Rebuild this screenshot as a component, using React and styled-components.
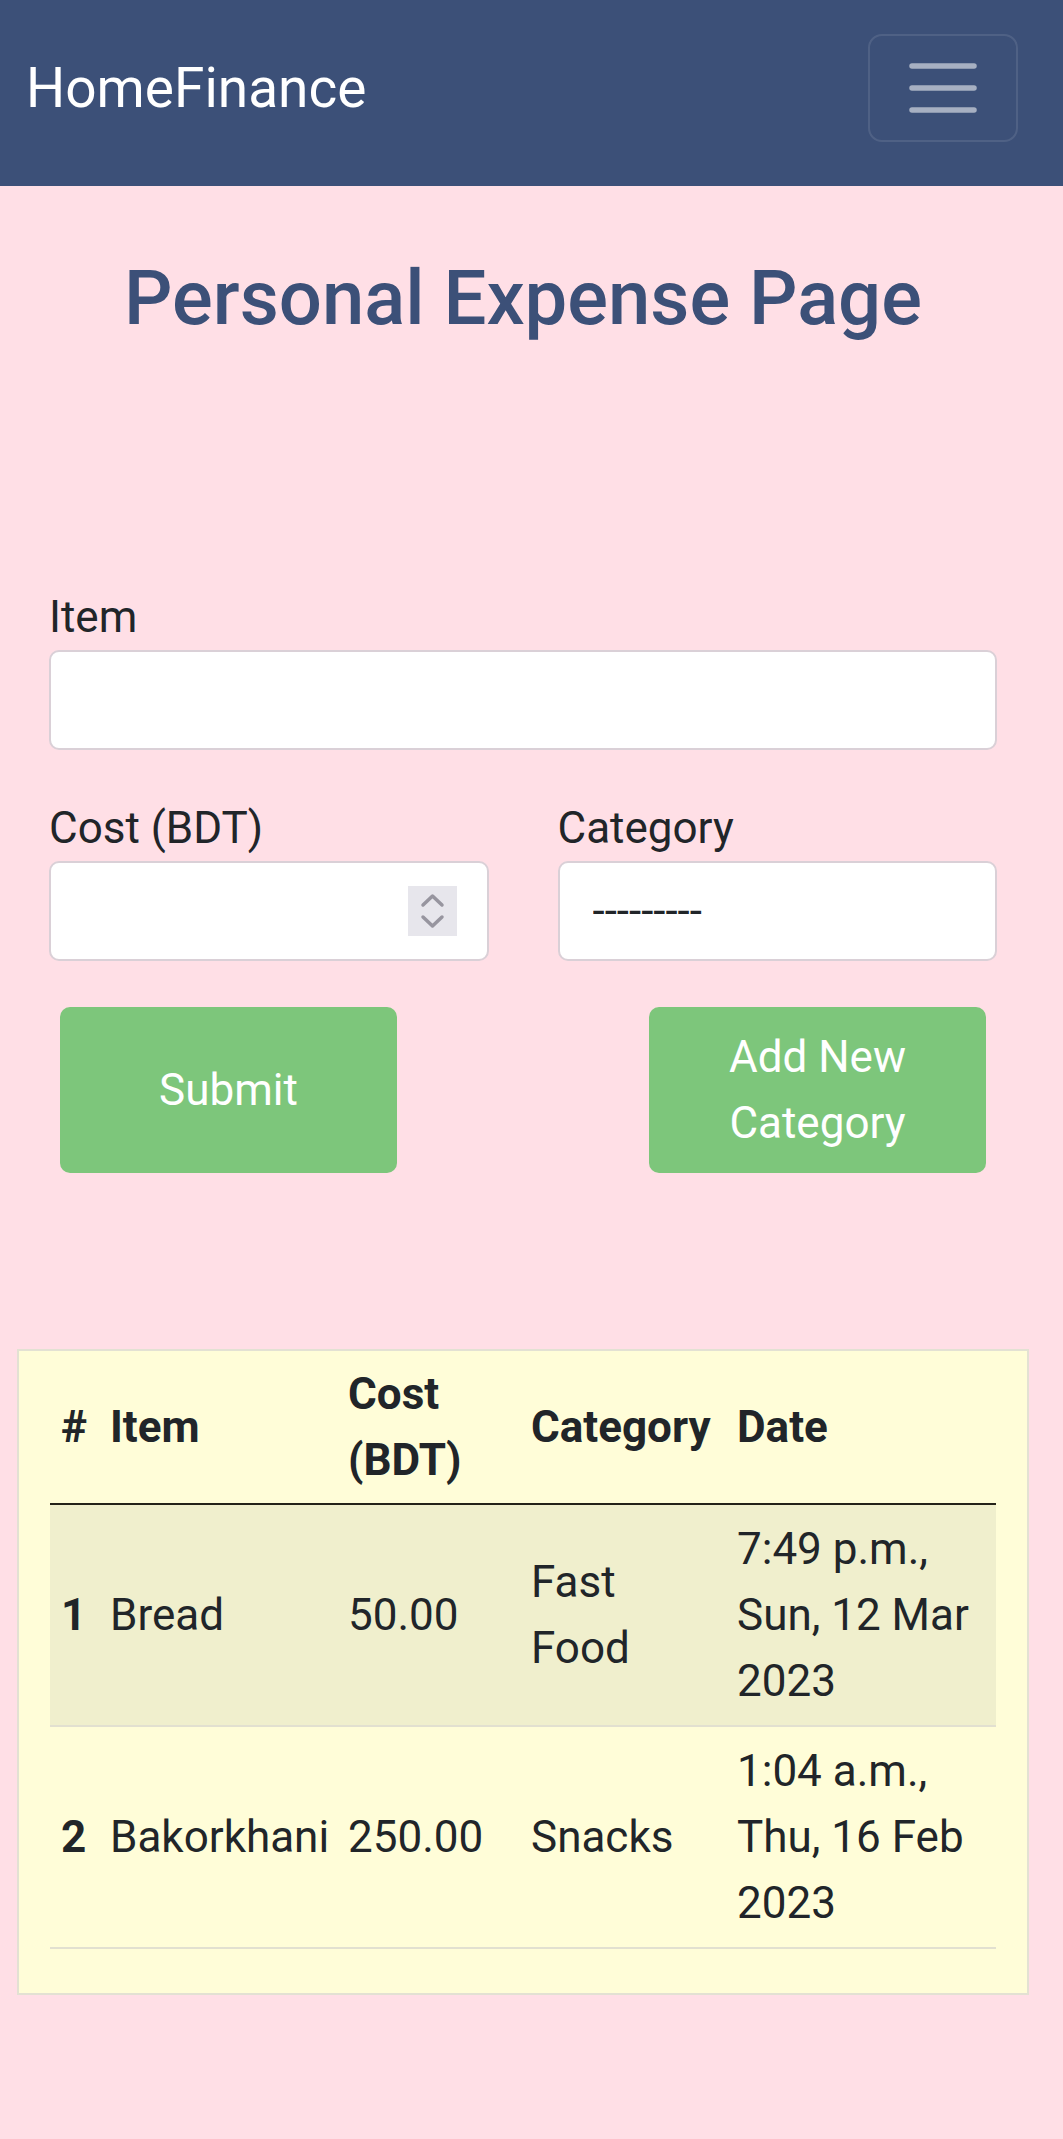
import styled, { createGlobalStyle } from "styled-components";

const GlobalStyle = createGlobalStyle`
    body {
        margin: 0;
        background: #ffdfe6;
        font-family: Roboto, "Liberation Sans", sans-serif;
        color: #212529;
    }
    * {
        box-sizing: border-box;
    }
`

const Navbar = styled.nav`
    display: flex;
    align-items: center;
    justify-content: space-between;
    height: 186px;
    padding: 34px 45px 44px 26px;
    background: #3c5078;
`

const Brand = styled.a`
    font-size: 55px;
    line-height: 1.5;
    color: #fff;
    text-decoration: none;
`

const Toggler = styled.button`
    display: flex;
    align-items: center;
    justify-content: center;
    width: 150px;
    height: 108px;
    padding: 0;
    background: transparent;
    border: 2.5px solid rgba(255, 255, 255, 0.1);
    border-radius: 14px;
`

const Main = styled.main`
    padding: 0 33px 120px 16px;
`

const Title = styled.h1`
    margin: 67px 0 0;
    font-size: 76px;
    font-weight: 500;
    line-height: 1.2;
    text-align: center;
    color: #3c5078;
`

const Form = styled.form`
    margin: 240px 33px 0;
`

const Field = styled.div`
    margin-bottom: 45px;
`

const Label = styled.label`
    display: block;
    font-size: 44px;
    line-height: 66px;
`

const inputBase = `
    display: block;
    width: 100%;
    height: 100px;
    padding: 0 33px;
    font-family: Roboto, "Liberation Sans", sans-serif;
    font-size: 44px;
    color: #212529;
    background: #fff;
    border: 2.5px solid #dad0d7;
    border-radius: 10px;
    outline: none;
`

const TextInput = styled.input`
    ${inputBase}

    &::-webkit-inner-spin-button,
    &::-webkit-outer-spin-button {
        -webkit-appearance: none;
        margin: 0;
    }
`

const Select = styled.select`
    ${inputBase}
    appearance: none;
    -webkit-appearance: none;
`

const Row = styled.div`
    display: grid;
    grid-template-columns: 1fr 1fr;
    column-gap: 69px;
`

const NumberWrap = styled.div`
    position: relative;
`

const Spinner = styled.span`
    position: absolute;
    top: 25px;
    right: 32px;
    width: 49px;
    height: 50px;
    background: #e7e6ec;

    svg {
        display: block;
    }
`

const ButtonRow = styled.div`
    display: flex;
    justify-content: space-between;
    padding: 1px 11px 0 11px;
`

const Button = styled.button`
    width: 337px;
    padding: 17px 22px;
    font-family: Roboto, "Liberation Sans", sans-serif;
    font-size: 44px;
    line-height: 66px;
    color: #fff;
    background: #7dc67b;
    border: none;
    border-radius: 10px;
`

const Card = styled.section`
    margin: 176px 1px 0;
    padding: 0 31px;
    background: #fffdd8;
    border: 2.5px solid #e3e1d3;
`

const Table = styled.table`
    width: 100%;
    margin-bottom: 44px;
    border-collapse: collapse;
    table-layout: fixed;
    font-size: 44px;
    line-height: 66px;

    th, td {
        padding: 11px;
        text-align: left;
        vertical-align: middle;
    }

    thead th {
        padding: 10px 11px;
        font-weight: 700;
        border-bottom: 2.5px solid #242219;
    }

    tbody th {
        font-weight: 700;
    }

    tbody td, tbody th {
        border-bottom: 2.5px solid #e2e0d0;
    }
`

const BodyRow = styled.tr`
    background: ${props => props.$striped ? "#f0efcd" : "transparent"};
`

const expenses = [
    { id: 1, item: "Bread", cost: "50.00", category: "Fast Food", date: "7:49 p.m., Sun, 12 Mar 2023" },
    { id: 2, item: "Bakorkhani", cost: "250.00", category: "Snacks", date: "1:04 a.m., Thu, 16 Feb 2023" },
]

const App = () => {
    const rows = expenses.map((exp, i) => (
        <BodyRow key={exp.id} $striped={i % 2 === 0}>
            <th>{exp.id}</th>
            <td>{exp.item}</td>
            <td>{exp.cost}</td>
            <td>{exp.category}</td>
            <td>{exp.date}</td>
        </BodyRow>
    ))

    return (
        <>
            <GlobalStyle />
            <Navbar>
                <Brand href="#">HomeFinance</Brand>
                <Toggler type="button">
                    <svg width="70" height="56" viewBox="0 0 70 56">
                        <g stroke="rgba(255,255,255,0.55)" strokeWidth="5.5" strokeLinecap="round">
                            <line x1="4" y1="6" x2="66" y2="6" />
                            <line x1="4" y1="28" x2="66" y2="28" />
                            <line x1="4" y1="50" x2="66" y2="50" />
                        </g>
                    </svg>
                </Toggler>
            </Navbar>

            <Main>
                <Title>Personal Expense Page</Title>

                <Form>
                    <Field>
                        <Label>Item</Label>
                        <TextInput type="text" />
                    </Field>

                    <Row>
                        <Field>
                            <Label>Cost (BDT)</Label>
                            <NumberWrap>
                                <TextInput type="number" />
                                <Spinner>
                                    <svg width="49" height="50" viewBox="0 0 49 50">
                                        <g fill="none" stroke="#97959f" strokeWidth="3.5" strokeLinecap="round" strokeLinejoin="round">
                                            <path d="M15 19 L24.5 10 L34 19" />
                                            <path d="M15 31 L24.5 40 L34 31" />
                                        </g>
                                    </svg>
                                </Spinner>
                            </NumberWrap>
                        </Field>
                        <Field>
                            <Label>Category</Label>
                            <Select defaultValue="">
                                <option value="">---------</option>
                                <option value="1">Fast Food</option>
                                <option value="2">Snacks</option>
                            </Select>
                        </Field>
                    </Row>

                    <ButtonRow>
                        <Button type="button">Submit</Button>
                        <Button type="button">Add New Category</Button>
                    </ButtonRow>
                </Form>

                <Card>
                    <Table>
                        <colgroup>
                            <col style={{ width: 49 }} />
                            <col style={{ width: 238 }} />
                            <col style={{ width: 183 }} />
                            <col style={{ width: 206 }} />
                            <col />
                        </colgroup>
                        <thead>
                            <tr>
                                <th>#</th>
                                <th>Item</th>
                                <th>Cost (BDT)</th>
                                <th>Category</th>
                                <th>Date</th>
                            </tr>
                        </thead>
                        <tbody>
                            {rows}
                        </tbody>
                    </Table>
                </Card>
            </Main>
        </>
    )
}

export default App;
